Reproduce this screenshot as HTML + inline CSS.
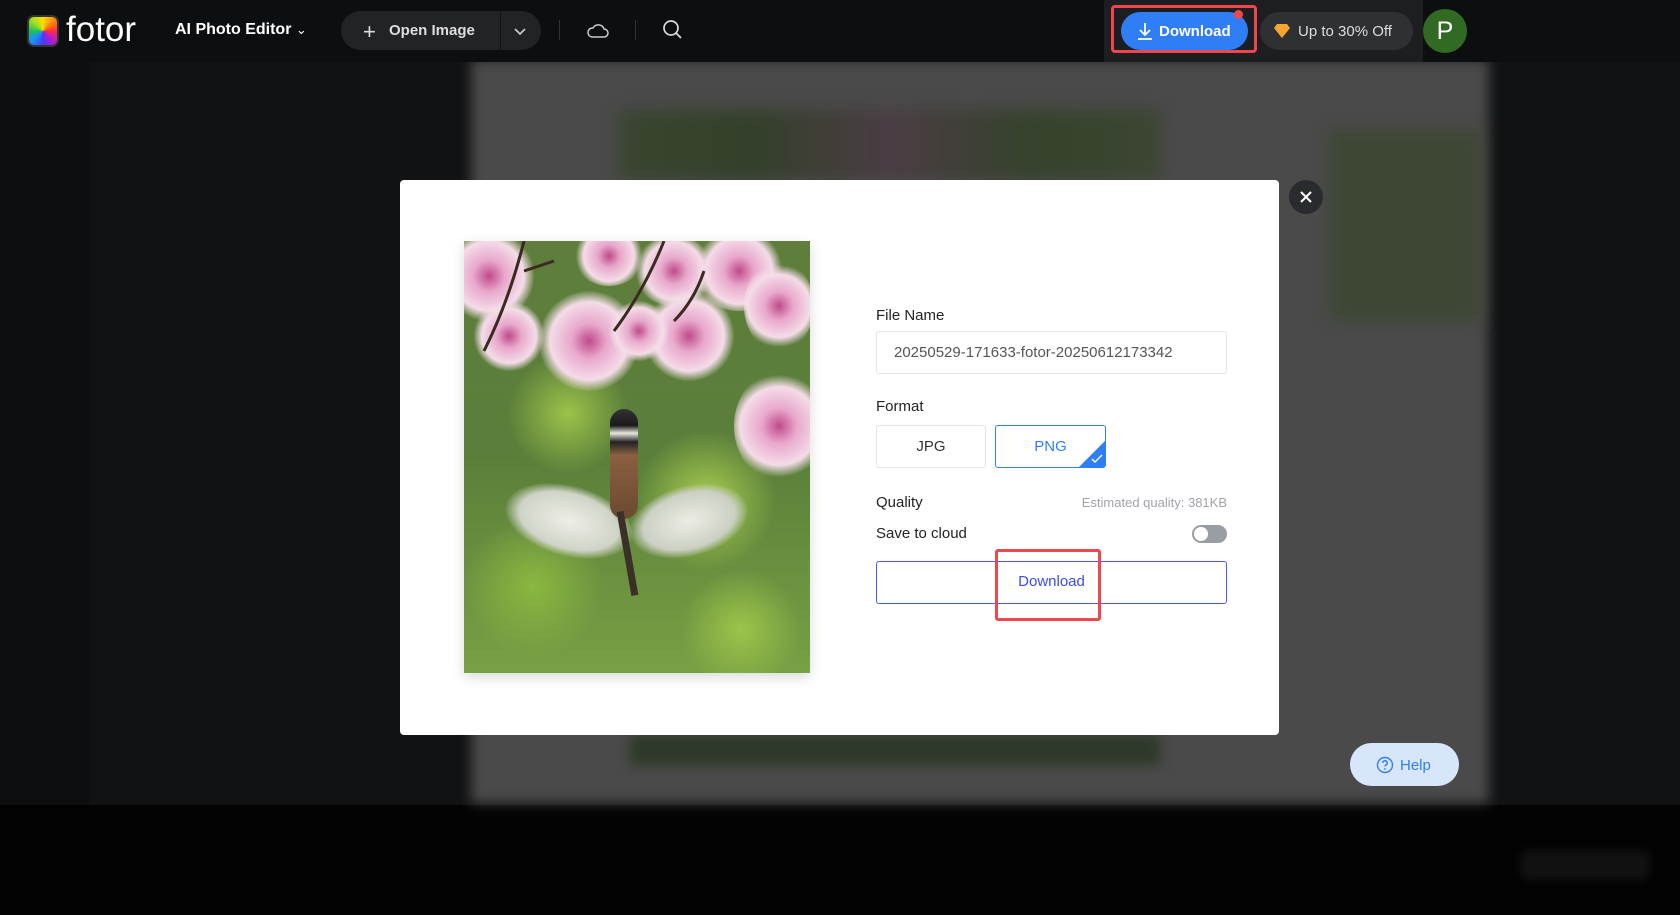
<!DOCTYPE html>
<html><head><meta charset="utf-8"><style>
*{box-sizing:border-box;margin:0;padding:0}
body{width:1680px;height:915px;overflow:hidden;background:#030303;font-family:"Liberation Sans",sans-serif;position:relative}
.abs{position:absolute}
.fl{position:absolute;border-radius:50%;background:radial-gradient(circle,#c04a8a 0,#e8a8cc 25%,#f4dce8 55%,rgba(244,220,232,0) 72%)}
</style></head><body>
<div class="abs" style="left:0;top:0;width:1680px;height:805px;background:#111214"></div>
<div class="abs" style="left:0;top:62px;width:90px;height:743px;background:#0d0e10"></div>
<div class="abs" style="left:471px;top:59px;width:1018px;height:744px;background:#4a4a4a;filter:blur(6px)"></div>
<div class="abs" style="left:620px;top:110px;width:540px;height:70px;background:linear-gradient(90deg,#3a4530,#34402a,#4a3d44,#36422c,#3c4632);filter:blur(8px)"></div>
<div class="abs" style="left:1330px;top:130px;width:150px;height:190px;background:#3d4734;filter:blur(8px)"></div>
<div class="abs" style="left:630px;top:735px;width:530px;height:30px;background:#2e3828;filter:blur(6px)"></div>
<div class="abs" style="left:1520px;top:850px;width:130px;height:30px;background:#111;border-radius:10px;filter:blur(4px)"></div>
<!-- top bar -->
<div class="abs" style="left:0;top:0;width:1680px;height:62px;background:#0d0e10"></div>
<div class="abs" style="left:27px;top:15px;width:32px;height:32px;border-radius:7px;background:conic-gradient(#ffe000,#ff8a00,#ff2a4a,#b01ad8,#4a3af0,#1a8cff,#20c060,#a0e020,#ffe000);border:2px solid #333"></div>
<div class="abs" style="left:66px;top:10px;color:#fff;font-size:35px">fotor</div>
<div class="abs" style="left:175px;top:21px;color:#fff;font-size:16px;font-weight:bold">AI Photo Editor <span style="font-weight:normal;font-size:13px">&#8964;</span></div>
<div class="abs" style="left:341px;top:11px;width:200px;height:39px;border-radius:20px;background:#222326"></div>
<div class="abs" style="left:500px;top:11px;width:1px;height:39px;background:#111"></div>
<div class="abs" style="left:363px;top:19px;color:#ddd;font-size:22px;font-weight:300">+</div>
<div class="abs" style="left:389px;top:22px;color:#ddd;font-size:15px;font-weight:bold">Open Image</div>
<svg class="abs" style="left:513px;top:24px" width="14" height="14"><path d="M2 5l5 5 5-5" stroke="#ccc" stroke-width="1.6" fill="none"/></svg>
<div class="abs" style="left:559px;top:20px;width:1px;height:20px;background:#333"></div>
<svg class="abs" style="left:586px;top:20px" width="24" height="20"><path d="M6 17h12a4 4 0 0 0 0-8 6 6 0 0 0-11-1 4.5 4.5 0 0 0-1 9z" stroke="#ccc" stroke-width="1.5" fill="none"/></svg>
<div class="abs" style="left:635px;top:20px;width:1px;height:20px;background:#333"></div>
<svg class="abs" style="left:662px;top:19px" width="22" height="22"><circle cx="9" cy="9" r="7" stroke="#ddd" stroke-width="1.7" fill="none"/><path d="M14 14l5 5" stroke="#ddd" stroke-width="1.7"/></svg>
<div class="abs" style="left:1104px;top:0;width:319px;height:62px;background:#1d1e22"></div>
<div class="abs" style="left:1121px;top:12px;width:127px;height:38px;border-radius:19px;background:#2f7ef5"></div>
<svg class="abs" style="left:1136px;top:21px" width="18" height="20"><path d="M9 2v12M4 9l5 5 5-5M2 18h14" stroke="#fff" stroke-width="1.8" fill="none"/></svg>
<div class="abs" style="left:1159px;top:23px;color:#fff;font-size:15px;font-weight:bold">Download</div>
<div class="abs" style="left:1111px;top:5px;width:146px;height:48px;border:3px solid #f0474c;border-radius:4px"></div>
<div class="abs" style="left:1234px;top:10px;width:9px;height:9px;border-radius:50%;background:#f0474c"></div>
<div class="abs" style="left:1260px;top:12px;width:153px;height:38px;border-radius:19px;background:#2f3034"></div>
<svg class="abs" style="left:1273px;top:23px" width="18" height="16"><path d="M4 1h10l3 4-8 10-8-10z" fill="#f7a531"/></svg>
<div class="abs" style="left:1298px;top:23px;color:#ddd;font-size:15px">Up to 30% Off</div>
<div class="abs" style="left:1423px;top:9px;width:44px;height:44px;border-radius:50%;background:#316a22;color:#fff;font-size:25px;text-align:center;line-height:44px">P</div>
<!-- modal -->
<div class="abs" style="left:400px;top:180px;width:879px;height:555px;background:#fff;border-radius:4px"></div>
<div class="abs" style="left:1289px;top:180px;width:34px;height:34px;border-radius:50%;background:#2a2b2e"></div>
<svg class="abs" style="left:1299px;top:190px" width="14" height="14"><path d="M2 2l10 10M12 2L2 12" stroke="#fff" stroke-width="2"/></svg>
<!-- image -->
<div class="abs" style="left:464px;top:241px;width:346px;height:432px;overflow:hidden;box-shadow:0 4px 12px rgba(0,0,0,.15);background:radial-gradient(circle at 30% 40%,#9cc24a 0,transparent 60px),radial-gradient(circle at 70% 60%,#a8cc50 0,transparent 70px),radial-gradient(circle at 20% 80%,#8ab840 0,transparent 70px),radial-gradient(circle at 80% 90%,#9bc44a 0,transparent 60px),linear-gradient(180deg,#5f7e3c,#5a7f3a 50%,#78a044)">
<div class="fl" style="left:-20px;top:-10px;width:90px;height:90px"></div>
<div class="fl" style="left:10px;top:60px;width:70px;height:70px"></div>
<div class="fl" style="left:110px;top:-15px;width:70px;height:60px"></div>
<div class="fl" style="left:170px;top:-5px;width:80px;height:70px"></div>
<div class="fl" style="left:230px;top:-10px;width:90px;height:80px"></div>
<div class="fl" style="left:75px;top:50px;width:100px;height:100px"></div>
<div class="fl" style="left:180px;top:50px;width:90px;height:90px"></div>
<div class="fl" style="left:145px;top:60px;width:60px;height:60px"></div>
<div class="fl" style="left:280px;top:20px;width:70px;height:90px"></div>
<div class="fl" style="left:270px;top:130px;width:90px;height:110px"></div>
<svg class="abs" style="left:0;top:0" width="346" height="200"><path d="M60 0 Q45 60 20 110 M200 0 Q180 50 150 90 M240 30 Q230 60 210 80 M60 30 L90 20" stroke="#3a2a20" stroke-width="3" fill="none"/></svg>
<div class="abs" style="left:40px;top:245px;width:130px;height:70px;border-radius:50%;background:radial-gradient(ellipse,#eeeee6,#d0d4c8 55%,rgba(200,204,190,0) 72%);transform:rotate(15deg)"></div>
<div class="abs" style="left:165px;top:245px;width:120px;height:70px;border-radius:50%;background:radial-gradient(ellipse,#ecede4,#ccd0c4 55%,rgba(200,204,190,0) 72%);transform:rotate(-15deg)"></div>
<div class="abs" style="left:146px;top:168px;width:28px;height:110px;border-radius:14px;background:linear-gradient(#333 0,#1a1a1a 15%,#e8e8e0 22%,#222 30%,#8a6040 42%,#6a4a30)"></div>
<div class="abs" style="left:160px;top:270px;width:7px;height:85px;background:#3a3028;transform:rotate(-10deg)"></div>
</div>
<!-- form -->
<div class="abs" style="left:876px;top:307px;font-size:15px;color:#222">File Name</div>
<div class="abs" style="left:876px;top:331px;width:351px;height:43px;border:1px solid #e4e4e6;border-radius:3px;font-size:15px;color:#555;padding:12px 0 0 17px">20250529-171633-fotor-20250612173342</div>
<div class="abs" style="left:876px;top:398px;font-size:15px;color:#222">Format</div>
<div class="abs" style="left:876px;top:425px;width:110px;height:43px;border:1px solid #e4e4e6;border-radius:3px;font-size:15px;color:#333;text-align:center;line-height:41px">JPG</div>
<div class="abs" style="left:995px;top:425px;width:111px;height:43px;border:1px solid #2f7ef5;border-radius:3px;font-size:15px;color:#2f7ef5;text-align:center;line-height:41px;overflow:hidden">PNG<div class="abs" style="right:0;bottom:0;width:0;height:0;border-left:26px solid transparent;border-bottom:26px solid #2f7ef5"></div><svg class="abs" style="right:2px;bottom:3px" width="12" height="10"><path d="M1 5l3 3 7-7" stroke="#fff" stroke-width="1.4" fill="none"/></svg></div>
<div class="abs" style="left:876px;top:494px;font-size:15px;color:#222">Quality</div>
<div class="abs" style="left:1000px;top:495px;width:227px;text-align:right;font-size:13px;color:#a0a3ab">Estimated quality: 381KB</div>
<div class="abs" style="left:876px;top:525px;font-size:15px;color:#222">Save to cloud</div>
<div class="abs" style="left:1192px;top:525px;width:35px;height:18px;border-radius:9px;background:#9a9da4"></div>
<div class="abs" style="left:1194px;top:527px;width:14px;height:14px;border-radius:50%;background:#fff"></div>
<div class="abs" style="left:876px;top:561px;width:351px;height:43px;border:1.5px solid #4a5cf0;border-radius:3px;font-size:15px;color:#3a4cf0;text-align:center;line-height:40px">Download</div>
<div class="abs" style="left:995px;top:549px;width:106px;height:72px;border:3px solid #f0474c;border-radius:3px"></div>
<!-- help -->
<div class="abs" style="left:1350px;top:743px;width:109px;height:43px;border-radius:22px;background:#d8e6fb"></div>
<svg class="abs" style="left:1376px;top:756px" width="18" height="18"><circle cx="9" cy="9" r="7.5" stroke="#2f7ef5" stroke-width="1.4" fill="none"/><path d="M6.8 7a2.2 2.2 0 1 1 3 2c-.7.3-.8.8-.8 1.5" stroke="#2f7ef5" stroke-width="1.4" fill="none"/><circle cx="9" cy="13" r=".9" fill="#2f7ef5"/></svg>
<div class="abs" style="left:1400px;top:757px;font-size:15px;color:#2f7ef5">Help</div>
</body></html>
